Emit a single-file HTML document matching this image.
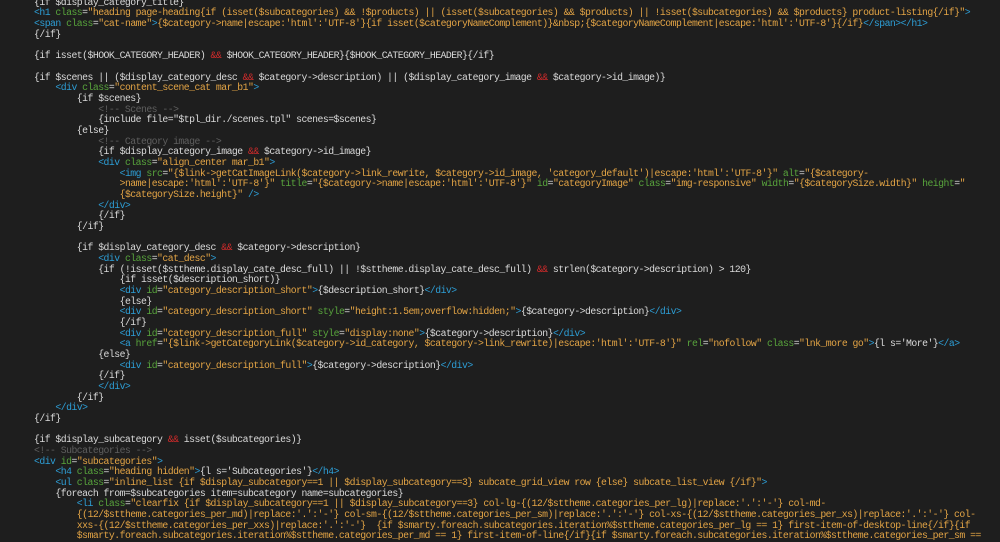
<!DOCTYPE html>
<html><head><meta charset="utf-8">
<style>
html,body{margin:0;padding:0;background:#1e1e1e;width:1000px;height:539px;overflow:hidden}
#c{position:absolute;left:34px;top:-2.2px;font-family:"Liberation Mono",monospace;font-size:9.8px;letter-spacing:-0.53px;line-height:10.68px;color:#dadada}
#c div{height:10.68px;white-space:pre}
.l1{padding-left:21.4px}.l2{padding-left:42.8px}.l3{padding-left:64.2px}.l4{padding-left:85.6px}
.t{color:#2d9ed6}.a{color:#58a43c}.s{color:#e3a445}.c{color:#5f5f5f}.r{color:#d32b2b}
</style></head><body>
<div id="c"><div>{if $display_category_title}</div><div><span class="t">&lt;h1 </span><span class="a">class</span>=<span class="s">"heading page-heading{if (isset($subcategories) &amp;&amp; !$products) || (isset($subcategories) &amp;&amp; $products) || !isset($subcategories) &amp;&amp; $products} product-listing{/if}"</span><span class="t">&gt;</span></div><div><span class="t">&lt;span </span><span class="a">class</span>=<span class="s">"cat-name"</span><span class="t">&gt;</span><span class="s">{$category-&gt;name|escape:'html':'UTF-8'}{if isset($categoryNameComplement)}&amp;nbsp;{$categoryNameComplement|escape:'html':'UTF-8'}{/if}</span><span class="t">&lt;/span&gt;&lt;/h1&gt;</span></div><div>{/if}</div><div></div><div>{if isset($HOOK_CATEGORY_HEADER) <span class="r">&amp;&amp;</span> $HOOK_CATEGORY_HEADER}{$HOOK_CATEGORY_HEADER}{/if}</div><div></div><div>{if $scenes || ($display_category_desc <span class="r">&amp;&amp;</span> $category-&gt;description) || ($display_category_image <span class="r">&amp;&amp;</span> $category-&gt;id_image)}</div><div class="l1"><span class="t">&lt;div </span><span class="a">class</span>=<span class="s">"content_scene_cat mar_b1"</span><span class="t">&gt;</span></div><div class="l2">{if $scenes}</div><div class="l3"><span class="c">&lt;!-- Scenes --&gt;</span></div><div class="l3">{include file="$tpl_dir./scenes.tpl" scenes=$scenes}</div><div class="l2">{else}</div><div class="l3"><span class="c">&lt;!-- Category image --&gt;</span></div><div class="l3">{if $display_category_image <span class="r">&amp;&amp;</span> $category-&gt;id_image}</div><div class="l3"><span class="t">&lt;div </span><span class="a">class</span>=<span class="s">"align_center mar_b1"</span><span class="t">&gt;</span></div><div class="l4"><span class="t">&lt;img </span><span class="a">src</span>=<span class="s">"{$link-&gt;getCatImageLink($category-&gt;link_rewrite, $category-&gt;id_image, 'category_default')|escape:'html':'UTF-8'}"</span> <span class="a">alt</span>=<span class="s">"{$category-</span></div><div class="l4"><span class="s">&gt;name|escape:'html':'UTF-8'}"</span> <span class="a">title</span>=<span class="s">"{$category-&gt;name|escape:'html':'UTF-8'}"</span> <span class="a">id</span>=<span class="s">"categoryImage"</span> <span class="a">class</span>=<span class="s">"img-responsive"</span> <span class="a">width</span>=<span class="s">"{$categorySize.width}"</span> <span class="a">height</span>=<span class="s">"</span></div><div class="l4"><span class="s">{$categorySize.height}"</span> <span class="t">/&gt;</span></div><div class="l3"><span class="t">&lt;/div&gt;</span></div><div class="l3">{/if}</div><div class="l2">{/if}</div><div></div><div class="l2">{if $display_category_desc <span class="r">&amp;&amp;</span> $category-&gt;description}</div><div class="l3"><span class="t">&lt;div </span><span class="a">class</span>=<span class="s">"cat_desc"</span><span class="t">&gt;</span></div><div class="l3">{if (!isset($sttheme.display_cate_desc_full) || !$sttheme.display_cate_desc_full) <span class="r">&amp;&amp;</span> strlen($category-&gt;description) &gt; 120}</div><div class="l4">{if isset($description_short)}</div><div class="l4"><span class="t">&lt;div </span><span class="a">id</span>=<span class="s">"category_description_short"</span><span class="t">&gt;</span>{$description_short}<span class="t">&lt;/div&gt;</span></div><div class="l4">{else}</div><div class="l4"><span class="t">&lt;div </span><span class="a">id</span>=<span class="s">"category_description_short"</span> <span class="a">style</span>=<span class="s">"height:1.5em;overflow:hidden;"</span><span class="t">&gt;</span>{$category-&gt;description}<span class="t">&lt;/div&gt;</span></div><div class="l4">{/if}</div><div class="l4"><span class="t">&lt;div </span><span class="a">id</span>=<span class="s">"category_description_full"</span> <span class="a">style</span>=<span class="s">"display:none"</span><span class="t">&gt;</span>{$category-&gt;description}<span class="t">&lt;/div&gt;</span></div><div class="l4"><span class="t">&lt;a </span><span class="a">href</span>=<span class="s">"{$link-&gt;getCategoryLink($category-&gt;id_category, $category-&gt;link_rewrite)|escape:'html':'UTF-8'}"</span> <span class="a">rel</span>=<span class="s">"nofollow"</span> <span class="a">class</span>=<span class="s">"lnk_more go"</span><span class="t">&gt;</span>{l s='More'}<span class="t">&lt;/a&gt;</span></div><div class="l3">{else}</div><div class="l4"><span class="t">&lt;div </span><span class="a">id</span>=<span class="s">"category_description_full"</span><span class="t">&gt;</span>{$category-&gt;description}<span class="t">&lt;/div&gt;</span></div><div class="l3">{/if}</div><div class="l3"><span class="t">&lt;/div&gt;</span></div><div class="l2">{/if}</div><div class="l1"><span class="t">&lt;/div&gt;</span></div><div>{/if}</div><div></div><div>{if $display_subcategory <span class="r">&amp;&amp;</span> isset($subcategories)}</div><div><span class="c">&lt;!-- Subcategories --&gt;</span></div><div><span class="t">&lt;div </span><span class="a">id</span>=<span class="s">"subcategories"</span><span class="t">&gt;</span></div><div class="l1"><span class="t">&lt;h4 </span><span class="a">class</span>=<span class="s">"heading hidden"</span><span class="t">&gt;</span>{l s='Subcategories'}<span class="t">&lt;/h4&gt;</span></div><div class="l1"><span class="t">&lt;ul </span><span class="a">class</span>=<span class="s">"inline_list {if $display_subcategory==1 || $display_subcategory==3} subcate_grid_view row {else} subcate_list_view {/if}"</span><span class="t">&gt;</span></div><div class="l1">{foreach from=$subcategories item=subcategory name=subcategories}</div><div class="l2"><span class="t">&lt;li </span><span class="a">class</span>=<span class="s">"clearfix {if $display_subcategory==1 || $display_subcategory==3} col-lg-{(12/$sttheme.categories_per_lg)|replace:'.':'-'} col-md-</span></div><div class="l2"><span class="s">{(12/$sttheme.categories_per_md)|replace:'.':'-'} col-sm-{(12/$sttheme.categories_per_sm)|replace:'.':'-'} col-xs-{(12/$sttheme.categories_per_xs)|replace:'.':'-'} col-</span></div><div class="l2"><span class="s">xxs-{(12/$sttheme.categories_per_xxs)|replace:'.':'-'}  {if $smarty.foreach.subcategories.iteration%$sttheme.categories_per_lg == 1} first-item-of-desktop-line{/if}{if</span></div><div class="l2"><span class="s">$smarty.foreach.subcategories.iteration%$sttheme.categories_per_md == 1} first-item-of-line{/if}{if $smarty.foreach.subcategories.iteration%$sttheme.categories_per_sm ==</span></div></div>
</body></html>
